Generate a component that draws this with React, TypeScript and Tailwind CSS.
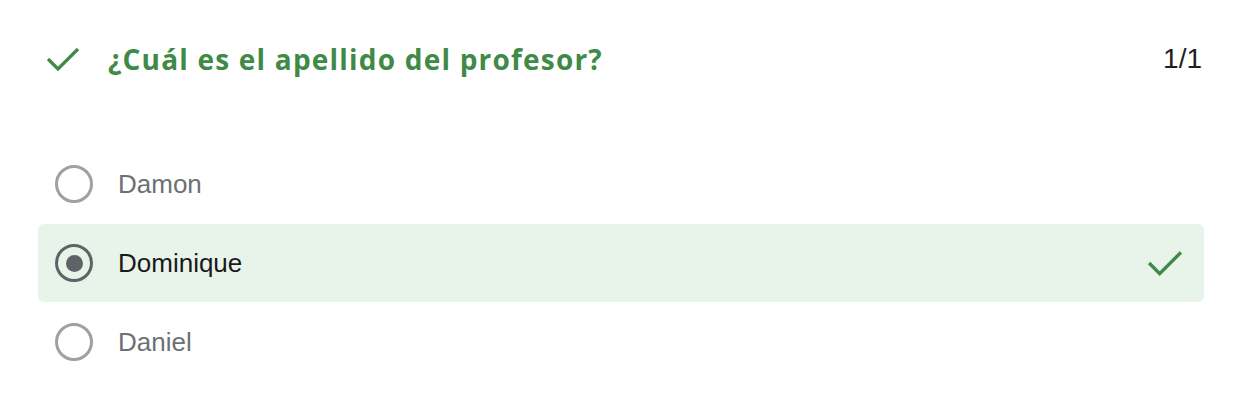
import React from "react";

const Check = ({ className }: { className?: string }) => (
  <svg viewBox="0 0 34 24" className={className} fill="none">
    <path d="M2 12 L12 22 L32 2" stroke="currentColor" strokeWidth="3.2" strokeLinecap="butt" strokeLinejoin="miter" />
  </svg>
);

const options = [
  { label: "Damon", selected: false },
  { label: "Dominique", selected: true },
  { label: "Daniel", selected: false },
];

export default function App() {
  return (
    <div className="w-[1242px] h-[405px] bg-white px-[38px] pt-[30px]" style={{ fontFamily: '"Liberation Sans", Arial, sans-serif' }}>
      <div className="flex items-center h-[58px] pl-[8px] pr-[2px]">
        <Check className="w-[34px] h-[24px] text-[#3f8a46] shrink-0" />
        <div
          className="ml-[28px] text-[28px] font-bold text-[#3f8a46] tracking-[1.2px]"
          style={{ fontFamily: '"Open Sans", "Roboto", sans-serif' }}
        >
          ¿Cuál es el apellido del profesor?
        </div>
        <div className="ml-auto text-[28px] text-[#1f1f1f]">1/1</div>
      </div>
      <div className="mt-[57px] flex flex-col gap-px">
        {options.map((o) => (
          <div
            key={o.label}
            className={`flex items-center h-[78px] pl-[17px] pr-[21px] rounded-[6px] ${o.selected ? "bg-[#e8f3ea]" : ""}`}
          >
            {o.selected ? (
              <div className="w-[38px] h-[38px] rounded-full border-[3.5px] border-[#5f6368] flex items-center justify-center shrink-0">
                <div className="w-[17px] h-[17px] rounded-full bg-[#5f6368]" />
              </div>
            ) : (
              <div className="w-[38px] h-[38px] rounded-full border-[3px] border-[#9da0a4] shrink-0" />
            )}
            <span className={`ml-[25px] text-[26px] ${o.selected ? "text-[#1a1a1a]" : "text-[#6d7074]"}`}>{o.label}</span>
            {o.selected && <Check className="ml-auto w-[36px] h-[26px] text-[#3f8a46]" />}
          </div>
        ))}
      </div>
    </div>
  );
}
